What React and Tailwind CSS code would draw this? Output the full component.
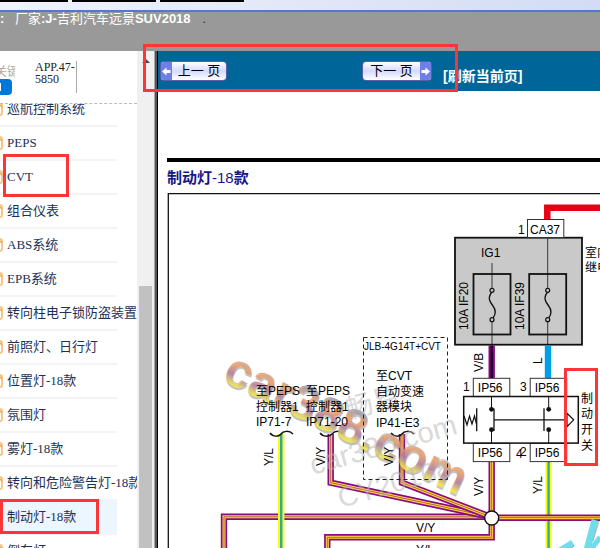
import { clsx } from 'clsx';

const menuItems = [
  { label: '巡航控制系统' },
  { label: 'PEPS' },
  { label: 'CVT', marked: true },
  { label: '组合仪表' },
  { label: 'ABS系统' },
  { label: 'EPB系统' },
  { label: '转向柱电子锁防盗装置' },
  { label: '前照灯、日行灯' },
  { label: '位置灯-18款' },
  { label: '氛围灯' },
  { label: '雾灯-18款' },
  { label: '转向和危险警告灯-18款' },
  { label: '制动灯-18款', active: true },
  { label: '倒车灯' },
];

function TopBar() {
  return (
    <header className="shrink-0">
      <div className="h-[12px] overflow-hidden border-b-2 border-[#5577cc] bg-gradient-to-r from-[#f1f3fb] to-[#d3dcf4]">
        <div className="flex h-[2px] gap-1">
          <span className="w-[68px] bg-black" />
          <span className="w-[84px] bg-black" />
          <span className="w-[84px] bg-black" />
        </div>
      </div>
      <div className="flex h-[39px] items-start bg-[#999999] text-[13px] leading-[14px] font-bold whitespace-pre text-white">
        <span className="w-[15px]">:</span>
        <span className="font-normal">厂家</span>
        <span>:J-</span>
        <span className="font-normal">吉利汽车远景</span>
        <span>SUV2018</span>
        <span className="pl-3 font-normal text-[#333333]">.</span>
      </div>
    </header>
  );
}

function PageIcon() {
  return (
    <svg viewBox="0 0 11 14" className="-ml-2 h-[14px] w-[11px] shrink-0" aria-hidden="true">
      <rect x="1" y="1" width="9" height="12" rx="2" fill="#fff" stroke="#f8c78a" strokeWidth="2" />
      <path d="M6 1L10 5" stroke="#f0a850" strokeWidth="1.5" />
    </svg>
  );
}

function MenuItem({ label, active, marked }) {
  return (
    <li
      className={clsx(
        'relative h-[34px] w-[117px] border-b-2 border-[#f4f4f4]',
        active && 'bg-[#ebf6ff]'
      )}
    >
      <a href="#" className="flex h-8 items-center gap-1 whitespace-nowrap">
        <PageIcon />
        <span>{label}</span>
      </a>
      {marked && <span className="absolute -top-[7px] left-[3px] h-[43px] w-[66px] border-3 border-[#fc3636]" />}
      {active && <span className="absolute -top-[2px] left-0 h-[35px] w-[99px] border-3 border-[#fc3636]" />}
    </li>
  );
}

function Sidebar() {
  return (
    <aside className="flex w-[158px] shrink-0 font-['Liberation_Serif','Noto_Sans_CJK_SC',serif]">
      <div className="flex w-[137px] flex-col overflow-hidden">
        <div className="flex h-[53px] shrink-0 items-start border-b border-dashed border-[#bbbbbb] pt-[10px]">
          <div className="-ml-[5px] flex w-10 flex-col">
            <input
              aria-label="关键字"
              placeholder="关键"
              className="mt-1 h-[14px] w-5 text-xs leading-[14px] placeholder:text-[#aaaaaa] outline-none"
            />
            <button className="h-4 w-[17px] overflow-hidden rounded-sm bg-[#0078d7]" aria-label="查询">
              <span className="ml-[5px] block h-2 w-px bg-white" />
            </button>
          </div>
          <div className="w-[42px] border-r border-[#aaaaaa] pb-2 text-xs leading-3 text-[#222222]">
            APP.47-
            <br />
            5850
          </div>
        </div>
        <nav className="min-h-0 flex-1 overflow-hidden">
          <ul className="-mt-[11px] text-[13px] text-[#1b3157]">
            {menuItems.map((item) => (
              <MenuItem key={item.label} {...item} />
            ))}
          </ul>
        </nav>
      </div>

      {/* scrollbar */}
      <div className="flex w-[17px] flex-col items-center bg-[#f0f0f0]">
        <svg viewBox="0 0 8 4" className="mt-2 h-1 w-2" aria-hidden="true">
          <path d="M0 4L4 0L8 4Z" fill="#444" />
        </svg>
        <div className="mt-[223px] w-[13px] flex-1 bg-[#c1c1c1]" />
      </div>
      <div className="w-1 border-r border-l border-r-black border-l-[#aaaaaa] bg-[#555555]" />
    </aside>
  );
}

function Arrow({ flip }) {
  return (
    <span className="flex w-[11px] items-center justify-center self-stretch bg-[#6f7fe8]">
      <svg viewBox="0 0 9 9" className={clsx('size-[9px]', flip && 'rotate-180')} aria-hidden="true">
        <path d="M0 4.5L4.5 0.5V3H8.5V6H4.5V8.5Z" fill="#fff" />
      </svg>
    </span>
  );
}

function PagerBar() {
  return (
    <div className="relative flex h-10 shrink-0 items-start bg-[#006699] pt-[10px] pl-[2px] text-[13px] text-black">
      <button className="flex h-5 w-[67px] items-center overflow-hidden rounded-sm border border-[#5a5fa8] bg-gradient-to-b from-white via-[#d5daff] to-white">
        <Arrow />
        <span className="flex-1 whitespace-nowrap">上一 页</span>
      </button>
      <button className="ml-[135px] flex h-5 w-[70px] items-center overflow-hidden rounded-sm border border-[#5a5fa8] bg-gradient-to-b from-white via-[#d5daff] to-white">
        <span className="flex-1 whitespace-nowrap">下一 页</span>
        <Arrow flip />
      </button>
      <a href="#" className="ml-[11px] pt-[6px] text-sm leading-[18px] font-bold whitespace-nowrap text-white">
        [刷新当前页]
      </a>
      <span className="pointer-events-none absolute -top-[7px] -left-[15px] z-10 h-[48px] w-[315px] border-3 border-[#fc3636]" />
    </div>
  );
}

// striped wire: wide base, core and optional thin centre line
function Wire({ d, base, core, coreWidth = 2, center }) {
  return (
    <g fill="none" strokeLinejoin="miter">
      <path d={d} stroke={base} strokeWidth="6.4" />
      {core && <path d={d} stroke={core} strokeWidth={coreWidth} />}
      {center && <path d={d} stroke={center} strokeWidth="0.8" />}
    </g>
  );
}

function VyWire({ d }) {
  return <Wire d={d} base="#8a0a86" core="#ffd83a" coreWidth={3} center="#9a4a50" />;
}

function YlWire({ d }) {
  return <Wire d={d} base="#fcfc10" core="#2aa9ae" coreWidth={2.4} />;
}

function Fuse({ x, top }) {
  return (
    <g fill="none" stroke="#111">
      <rect x={x - 18.5} y="274" width="37" height="60.5" strokeWidth="1.8" />
      <path d={`M${x} ${top}V288M${x} 322V345`} strokeWidth="0.8" />
      <path d={`M${x} 292C${x - 5} 298 ${x - 2} 302 ${x + 1} 306S${x + 4} 314 ${x + 1} 318`} strokeWidth="1.3" />
      <circle cx={x} cy="290.3" r="2" fill="#c9c9c9" strokeWidth="1.2" />
      <circle cx={x} cy="319.7" r="2" fill="#c9c9c9" strokeWidth="1.2" />
    </g>
  );
}

function VLabel({ x, y, children }) {
  return (
    <text x={x} y={y} transform={`rotate(-90 ${x} ${y})`}>
      {children}
    </text>
  );
}

function Plug({ x, y }) {
  return (
    <g>
      <rect x={x} y={y} width="36.5" height="18.3" fill="#fff" stroke="#333" strokeWidth="1" />
      <text x={x + 4.5} y={y + 13.7}>
        IP56
      </text>
    </g>
  );
}

function Diagram() {
  return (
    <svg
      viewBox="166 192 434 356"
      className="h-[356px] w-[434px] shrink-0 font-['Liberation_Sans','Noto_Sans_CJK_SC',sans-serif] text-xs"
      role="img"
      aria-label="制动灯电路图"
    >
      <defs>
        <linearGradient id="mark" x1="0" y1="0" x2="0.03" y2="1">
          <stop offset="0.2" stopColor="#8d98b4" />
          <stop offset="0.42" stopColor="#f2a368" />
          <stop offset="0.62" stopColor="#b07ea6" />
          <stop offset="0.8" stopColor="#f4ea50" />
        </linearGradient>
      </defs>
      <path d="M168.3 548V193.6H600" fill="none" stroke="#111" strokeWidth="1.3" />

      {/* supply and fuse box */}
      <path d="M547.3 220V207.8H600" fill="none" stroke="#e60012" strokeWidth="6.5" />
      <rect x="455" y="237.7" width="127" height="107" fill="#c9c9c9" stroke="#111" strokeWidth="1.8" />
      <rect x="527.5" y="219.5" width="36.3" height="18" fill="#fff" stroke="#333" />
      <Fuse x={492} top={263} />
      <Fuse x={547.7} top={238} />
      <text x="518" y="234">1</text>
      <text x="530" y="234">CA37</text>
      <text x="481" y="257">IG1</text>
      <VLabel x={468} y={330}>10A IF20</VLabel>
      <VLabel x={524} y={330}>10A IF39</VLabel>
      <text x="585" y="257">室内</text>
      <text x="585" y="272">继电</text>

      {/* wires */}
      <Wire d="M491.7 345.5V378" base="#8a0a86" core="#1a0020" coreWidth={2.4} />
      <Wire d="M548 345.5V378" base="#00a0e9" />
      <VyWire d="M224 548V516.8H492" />
      <VyWire d="M327.3 548V537.3H491.7V462" />
      <YlWire d="M548.6 462V548" />
      <VyWire d="M492 517.7H600" />
      <YlWire d="M281.2 434V548" />
      <VyWire d="M330.7 434V482.7L491 517" />
      <VyWire d="M402 434V482.7L491 517" />
      <circle cx="491.7" cy="518" r="7" fill="#fff" stroke="#111" strokeWidth="1.4" />
      <g fill="none" stroke="#111" strokeWidth="1.5">
        <path d="M270 433C273 437 279 437 281 434S289 430 293 434" />
        <path d="M320 433C323 437 329 437 332 434S339 430 343 434" />
        <path d="M391 433C394 437 400 437 402 434S410 430 414 434" />
      </g>

      {/* watermarks */}
      <g transform="translate(221 380) rotate(26)" fontSize="48" fontWeight="bold">
        <text x="1" y="2" fill="#555" opacity="0.35">car388.com</text>
        <text fill="url(#mark)" opacity="0.85">car388.com</text>
      </g>
      <g fill="#b4b4b4" opacity="0.5">
        <text transform="translate(349 419) rotate(-16)" fontSize="27">畅易</text>
        <text transform="translate(313 475) rotate(-16)" fontSize="29">car388.com</text>
        <text transform="translate(341 508) rotate(-16)" fontSize="28">CY20168</text>
      </g>
      <g fill="none" stroke="#70dcec" strokeWidth="7">
        <path d="M595 520L587 550" />
        <path d="M600 537L591 550" strokeWidth="5" />
        <path d="M573 543L560 551" />
      </g>
      <path d="M599 521L593 541M574 546L568 550" stroke="#888" strokeWidth="1" opacity="0.6" />

      {/* connectors on the left */}
      <rect x="363.5" y="337.5" width="84" height="142" fill="none" stroke="#222" strokeDasharray="4 3" />
      <text x="364" y="350" fontSize="10">JLB-4G14T+CVT</text>
      <g>
        <text x="256" y="395">至PEPS</text>
        <text x="256" y="411">控制器1</text>
        <text x="256" y="426">IP71-7</text>
        <text x="306" y="395">至PEPS</text>
        <text x="306" y="411">控制器1</text>
        <text x="306" y="426">IP71-20</text>
        <text x="376" y="380">至CVT</text>
        <text x="376" y="396">自动变速</text>
        <text x="376" y="411">器模块</text>
        <text x="376" y="427">IP41-E3</text>
      </g>
      <VLabel x={273} y={466}>Y/L</VLabel>
      <VLabel x={325} y={466}>V/Y</VLabel>
      <VLabel x={393} y={466}>V/Y</VLabel>
      <VLabel x={483} y={372}>V/B</VLabel>
      <VLabel x={542} y={364}>L</VLabel>
      <VLabel x={483} y={496}>V/Y</VLabel>
      <VLabel x={542} y={494}>Y/L</VLabel>
      <text x="416" y="532">V/Y</text>
      <text x="416" y="554">Y/L</text>

      {/* brake switch */}
      <Plug x={473.3} y={378.3} />
      <Plug x={530.2} y={378.3} />
      <Plug x={473.3} y={443.3} />
      <Plug x={530.2} y={443.3} />
      <text x="463" y="391">1</text>
      <text x="520" y="391">3</text>
      <text x="516" y="458">4</text>
      <text x="520" y="456">2</text>
      <g fill="none" stroke="#111">
        <rect x="463.7" y="396.5" width="114.6" height="46.6" strokeWidth="1.5" />
        <path d="M464 416L467 425L469.5 416L472 424L474.5 416L476.5 424" strokeWidth="1.2" />
        <path d="M476.7 408.3V431.3M494 408.5V431M544 408.3V431M494 419.8H567" strokeWidth="1.3" />
        <path d="M491.5 396.5V409H494M491.5 443V430H494M548.7 396.5V409M548.7 430V443" />
        <path d="M567 413.3L573.7 419.8L567 426.7Z" fill="#fff" strokeWidth="1.2" />
      </g>
      <g fill="#111">
        <circle cx="491.5" cy="409.3" r="2.4" />
        <circle cx="491.5" cy="429.7" r="2.4" />
        <circle cx="548.7" cy="409.3" r="2.4" />
        <circle cx="548.7" cy="429.7" r="2.4" />
      </g>
      <text>
        <tspan x="581" y="403">制</tspan>
        <tspan x="581" y="418">动</tspan>
        <tspan x="581" y="434">开</tspan>
        <tspan x="581" y="450">关</tspan>
      </text>
      <rect x="565.5" y="369.5" width="31" height="95" fill="none" stroke="#fc3636" strokeWidth="3" />
    </svg>
  );
}

export default function App() {
  return (
    <div className="flex h-screen flex-col overflow-hidden bg-white font-['Liberation_Sans','Noto_Sans_CJK_SC',sans-serif]">
      <TopBar />
      <div className="flex min-h-0 flex-1">
        <Sidebar />
        <main className="flex min-w-0 flex-1 flex-col">
          <PagerBar />
          <div className="flex min-h-0 flex-1 flex-col overflow-hidden pt-[67px] pl-2">
            <hr className="ml-px shrink-0 border-t-4 border-black" />
            <h1 className="ml-px h-[30px] shrink-0 text-[15px] leading-8 font-bold text-[#16168a]">
              制动灯<span className="font-normal">-18</span>款
            </h1>
            <Diagram />
          </div>
        </main>
      </div>
    </div>
  );
}
